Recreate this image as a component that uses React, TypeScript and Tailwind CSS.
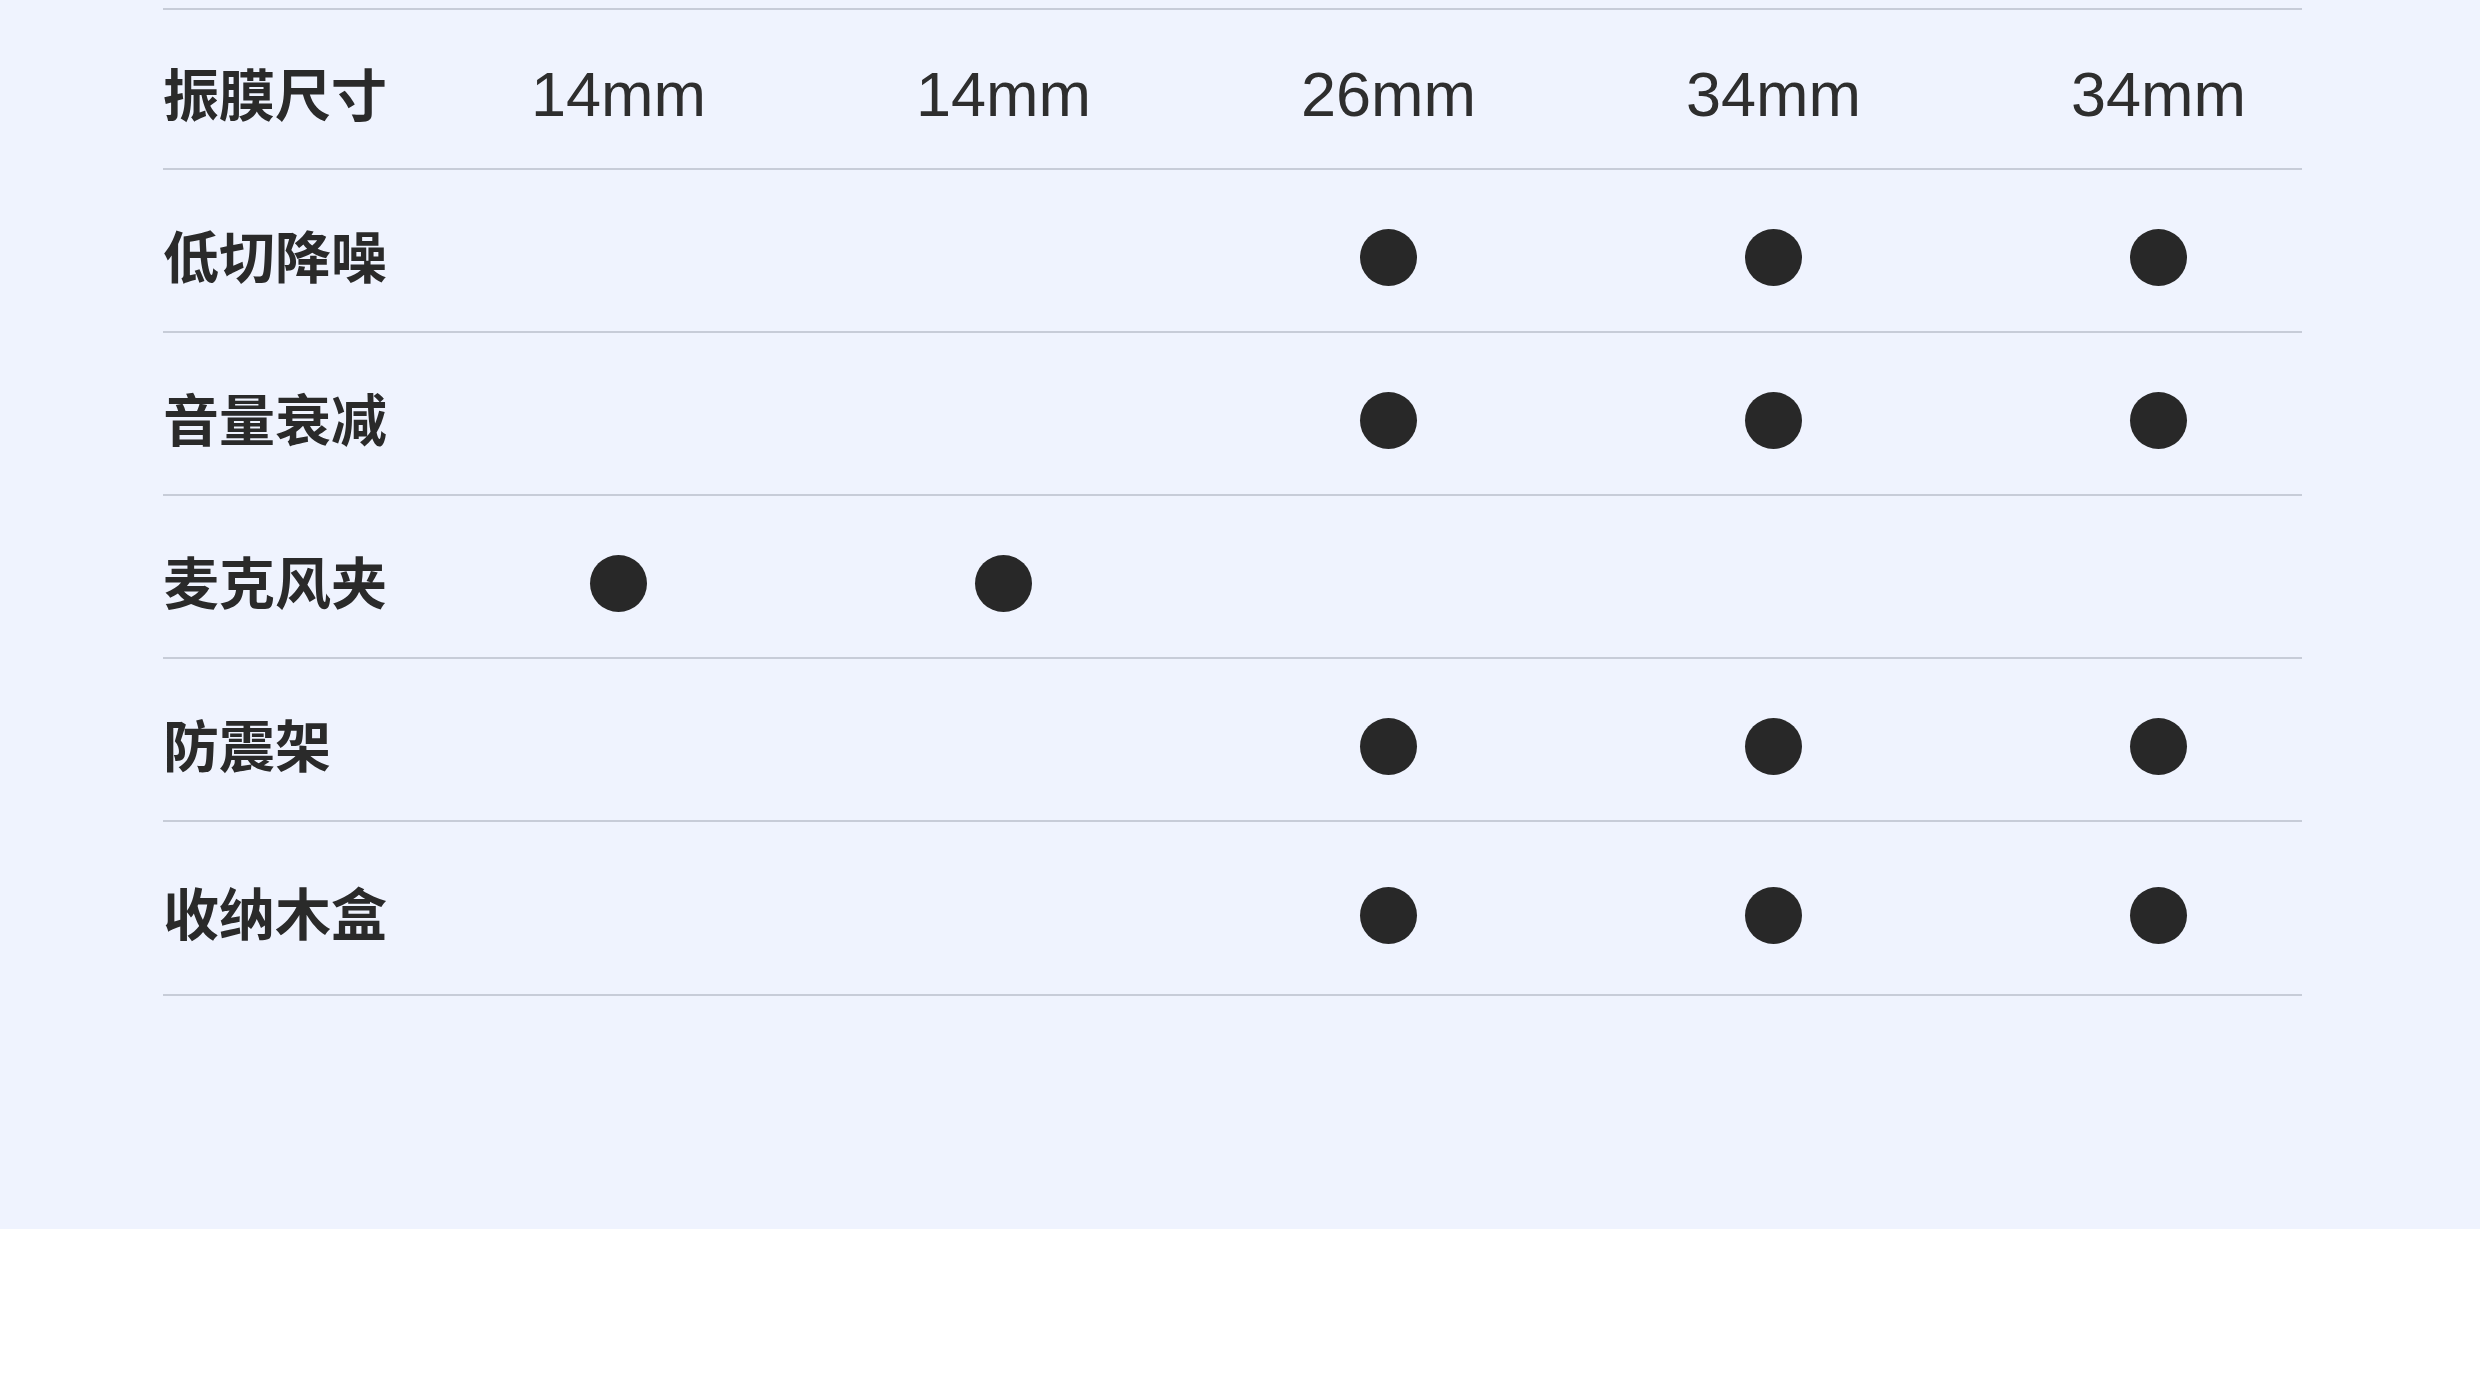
import React from 'react';

const sizes = ['14mm', '14mm', '26mm', '34mm', '34mm'];

const features = [
  { label: '低切降噪', has: [false, false, true, true, true] },
  { label: '音量衰减', has: [false, false, true, true, true] },
  { label: '麦克风夹', has: [true, true, false, false, false] },
  { label: '防震架', has: [false, false, true, true, true] },
  { label: '收纳木盒', has: [false, false, true, true, true] },
];

const cjk = { fontFamily: '"Noto Sans CJK SC", "Noto Sans", sans-serif' };
const num = { fontFamily: '"Liberation Sans", Arial, sans-serif' };

const Dot = () => <div className="w-[57px] h-[57px] rounded-full bg-[#282828] mt-[14px]" />;

export default function App() {
  return (
    <div className="w-full h-[1396px] bg-white">
      <section className="h-[1229px] bg-[#eff3fe] pl-[163px] pt-[8px]">
        <div className="w-[2139px] border-t-2 border-[#c7ccd8]">
          {/* size row */}
          <div className="grid grid-cols-[263px_repeat(5,385px)] h-[160px] items-center border-b-2 border-[#c7ccd8]">
            <div className="text-[56px] font-bold text-[#2a2a2a] pt-[6px]" style={cjk}>
              振膜尺寸
            </div>
            {sizes.map((s, i) => (
              <div key={i} className="text-center text-[63px] text-[#2e2e2e] pt-[11px]" style={num}>
                {s}
              </div>
            ))}
          </div>

          {/* feature rows */}
          {features.map((f, r) => (
            <div
              key={f.label}
              className={`grid grid-cols-[263px_repeat(5,385px)] items-center border-b-2 border-[#c7ccd8] ${
                r === features.length - 1 ? 'h-[174px]' : 'h-[163px]'
              }`}
            >
              <div className="text-[56px] font-bold text-[#2a2a2a] pt-[6px]" style={cjk}>
                {f.label}
              </div>
              {f.has.map((h, i) => (
                <div key={i} className="flex justify-center">
                  {h && <Dot />}
                </div>
              ))}
            </div>
          ))}
        </div>
      </section>
    </div>
  );
}
